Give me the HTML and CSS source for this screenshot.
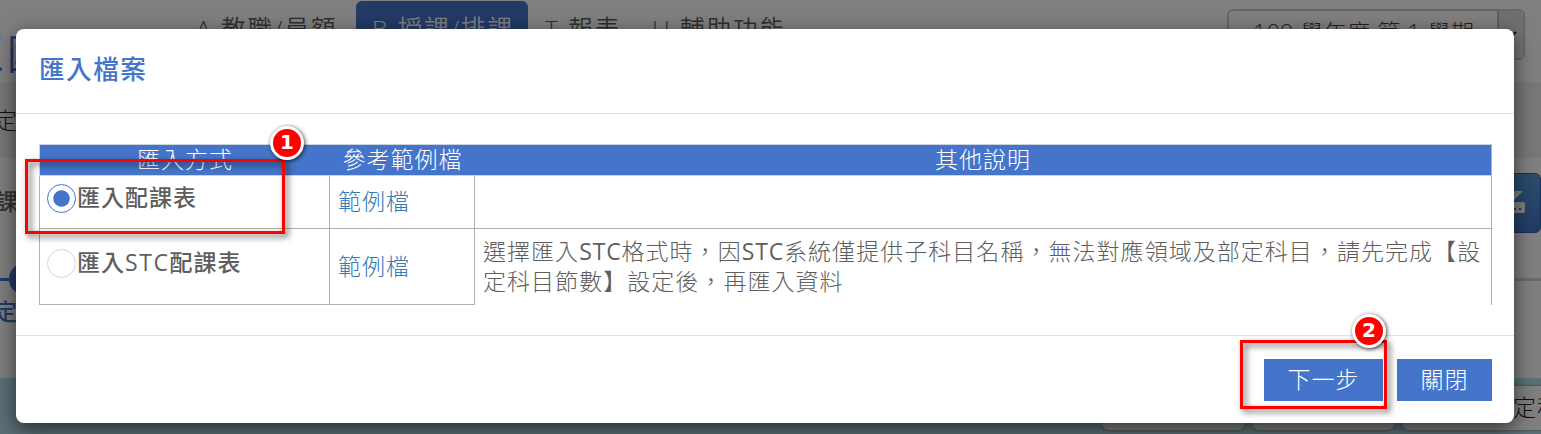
FILE: index.html
```html
<!DOCTYPE html>
<html lang="zh-Hant">
<head>
<meta charset="utf-8">
<title>匯入檔案</title>
<link rel="stylesheet" href="styles.css">
</head>
<body>
<div class="page">
  <header class="top">
    <div class="brand">區國</div>
    <nav class="nav">
      <span class="nav-item">A 教職/員額</span>
      <span class="nav-item active">B 授課/排課</span>
      <span class="nav-item">T 報表</span>
      <span class="nav-item">U 輔助功能</span>
    </nav>
    <div class="term"><span class="term-text">109 學年度 第 1 學期</span><span class="term-arrow"><svg width="12" height="8" viewBox="0 0 12 8"><path d="M1 1l5 5 5-5" fill="none" stroke="#222" stroke-width="2"/></svg></span></div>
  </header>
  <div class="crumb"><span>定</span></div>
  <div class="toolbar">
    <b>課</b>
    <span class="tool"><svg width="30" height="28" viewBox="0 0 30 28"><path d="M12 0h6v2h9l-12 12-12-12h9z" fill="#fff"/><rect x="1" y="13" width="28" height="11" rx="2" fill="#fff"/><path d="M18 20h2M23 20h2" stroke="#3a74c4" stroke-width="2"/></svg></span>
  </div>
  <div class="steps">
    <div class="rail"><i class="rail-done"></i><i class="dot"></i><i class="rail-todo"></i></div>
    <b>定</b>
  </div>
  <div class="cards">
    <div class="card"></div><div class="card"></div><div class="card last">定科</div>
  </div>
</div>
<div class="backdrop"></div>
<section class="modal">
  <h1 class="modal-head">匯入檔案</h1>
  <div class="modal-body">
    <div class="table">
      <div class="row head"><div>匯入方式</div><div>參考範例檔</div><div>其他說明</div></div>
      <div class="row first">
        <label class="cell choice"><i class="radio on"></i><b>匯入配課表</b></label>
        <div class="cell"><a class="link">範例檔</a></div>
        <div class="cell"></div>
      </div>
      <div class="row second">
        <label class="cell choice"><i class="radio"></i><b>匯入<span class="latin-bold">STC</span>配課表</b></label>
        <div class="cell"><a class="link">範例檔</a></div>
        <div class="cell note"><div>選擇匯入<span class="latin">STC</span>格式時，因<span class="latin">STC</span>系統僅提供子科目名稱，無法對應領域及部定科目，請先完成【設</div><div>定科目節數】設定後，再匯入資料</div></div>
      </div>
    </div>
  </div>
  <footer class="modal-foot"><span class="btn next">下一步</span><span class="btn close">關閉</span></footer>
</section>
<div class="frame frame-one"></div>
<div class="frame frame-two"></div>
<div class="badge badge-one">1</div>
<div class="badge badge-two">2</div>
</body>
</html>
```
FILE: styles.css
```css
* { box-sizing: border-box; }
body {
  margin: 0;
  width: 1541px;
  height: 434px;
  overflow: hidden;
  position: relative;
  color: #5e5e5e;
  font: 300 23px/30px "Open Sans", "Noto Sans CJK TC", sans-serif;
  letter-spacing: 1px;
  white-space: nowrap;
}
.page { height: 434px; overflow: hidden; background: #fff; }
.top { display: flex; height: 82px; }
.brand { width: 192px; margin-left: -37px; padding-top: 28px; font-size: 41px; line-height: 50px; color: #4575cb; letter-spacing: 3px; font-weight: 400; }
.nav { display: flex; height: 56px; margin: 1px 0 0 24px; font-size: 24.5px; letter-spacing: 2px; font-weight: 350; }
.nav-item { padding: 13px 0 0 17px; flex: none; width: 177px; line-height: 30px; }
.nav-item.active { width: 172px; padding-left: 16px; background: #4575cb; color: #fff; border-radius: 6px; }
.nav-item:nth-child(3) { width: 107px; }
.nav-item:nth-child(4) { width: 174px; }
.term { display: flex; width: 298px; height: 51px; margin: 9px 16px 0 auto; border: 2px solid #ccc; border-radius: 6px; color: #444; }
.term-text { flex: 1; padding: 6px 0 0 24px; letter-spacing: .5px; }
.term-arrow { width: 26px; background: linear-gradient(#ddd, #eee); border-left: 2px solid #bbb; display: flex; align-items: center; justify-content: center; }
.crumb { height: 76px; padding-top: 23px; margin-left: -6px; background: #eee; color: #222; }
.toolbar { display: flex; justify-content: space-between; height: 90px; padding-top: 15px; }
.toolbar b { margin: 13px 0 0 -5px; color: #666; font-weight: 500; }
.tool { width: 61px; height: 60px; display: flex; align-items: center; justify-content: center; border-radius: 6px; border: 1px solid #305cae; background: linear-gradient(#579bd8, #4276cc); }
.steps { height: 130px; padding-top: 15px; }
.steps b { display: block; margin-left: -6px; color: #4575cb; font-weight: 500; line-height: 32px; }
.rail { display: flex; align-items: center; height: 32px; }
.rail-done { width: 9px; height: 3px; background: #4575cb; }
.dot { width: 32px; height: 32px; border-radius: 50%; background: #4575cb; }
.rail-todo { flex: 1; height: 3px; background: #d0d6dc; }
.cards { display: flex; gap: 7px; height: 56px; padding: 8px 0 0 1102px; background: #b4dfea; color: #222; }
.card { width: 143px; height: 44px; flex: none; background: #fff; border-radius: 7px; box-shadow: 0 0 3px #777; }
.card.last { width: 160px; padding: 6px 0 0 111px; }
.backdrop { position: absolute; inset: 0; background: rgba(0, 0, 0, .5); }
.modal { position: absolute; left: 16px; top: 29px; width: 1498px; height: 394px; background: #fff; border-radius: 8px; box-shadow: 0 6px 20px rgba(0, 0, 0, .6); }
.modal-head { margin: 0; height: 85px; padding: 22px 23px 0; border-bottom: 1px solid #e2e2e2; color: #4575cb; font-size: 25.6px; line-height: 38px; font-weight: 500; letter-spacing: 1.5px; }
.modal-body { height: 221px; padding: 30px 22px 0 23px; }
.table { width: 1453px; height: 161px; border-right: 1px solid #b3b0aa; }
.row { display: grid; grid-template-columns: 290px 145px 1fr; }
.head { height: 32px; border: 1px solid #ccd3dd; border-right: 0; background: #4575cb; color: #fff; text-align: center; line-height: 29px; }
.cell { border-left: 1px solid #b3b0aa; padding: 0 8px 2px; display: flex; align-items: center; }
.first { height: 53px; border-bottom: 1px solid #b3b0aa; }
.second { height: 76px; }
.second .cell:not(.note) { border-bottom: 1px solid #b3b0aa; }
.choice { padding: 0 7px; align-items: flex-start; }
.choice b { font-weight: 500; padding: 6px 0 0 1px; }
.second .choice b { padding-top: 18px; }
.radio { width: 29px; height: 29px; margin-top: 8px; flex: none; border: 1px solid #d5d5d5; border-radius: 50%; }
.second .radio { margin-top: 20px; }
.radio.on { border-color: #4575cb; background: radial-gradient(circle, #4575cb 7.8px, #fff 8.6px); }
.link { color: #337ab7; }
.note { display: block; padding-top: 7px; letter-spacing: 1.04px; }
.latin { font-weight: 400; letter-spacing: .85px; }
.latin-bold { letter-spacing: 1.6px; }
.modal-foot { display: flex; justify-content: flex-end; gap: 14px; height: 88px; padding: 23px 22px 0; border-top: 1px solid #e2e2e2; }
.btn { height: 42px; background: #4575cb; color: #fff; text-align: center; line-height: 40px; }
.next { width: 119px; }
.close { width: 95px; }
.frame { position: absolute; border: 3px solid #f00; filter: drop-shadow(3px 3px 3px rgba(0, 0, 0, .65)); }
.frame-one { left: 25px; top: 159px; width: 260px; height: 75px; }
.frame-two { left: 1240px; top: 340px; width: 147px; height: 69px; }
.badge { position: absolute; width: 34px; height: 34px; border: 3px solid #fff; border-radius: 50%; background: #f00; color: #fff; text-align: center; font: bold 20px/27px "DejaVu Sans", sans-serif; letter-spacing: 0; box-shadow: 1px 1px 4px rgba(0, 0, 0, .75); }
.badge-one { left: 270px; top: 126px; }
.badge-two { left: 1352px; top: 314px; }
```
